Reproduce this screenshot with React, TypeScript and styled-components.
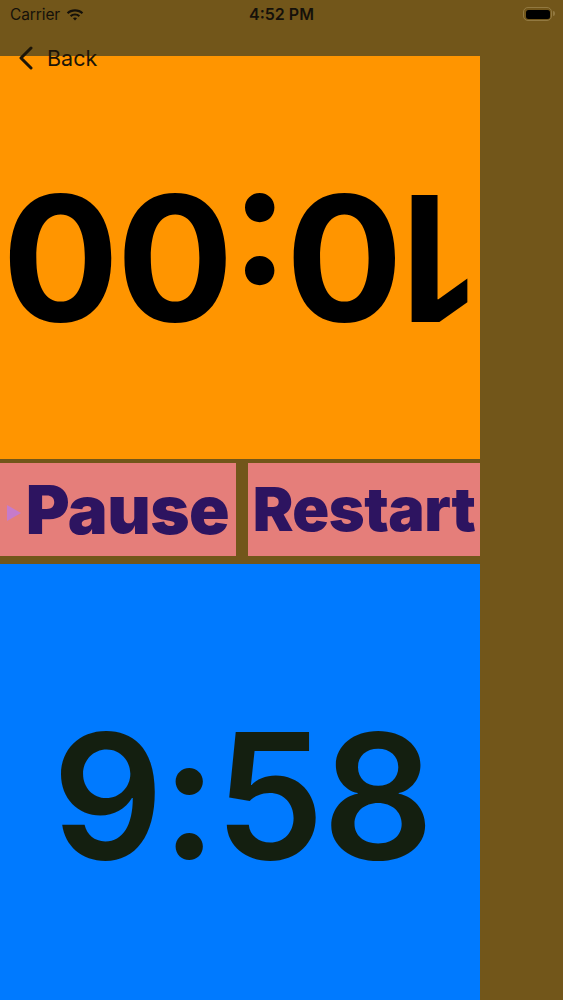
import React from "react";
import styled, { createGlobalStyle } from "styled-components";

const GlobalStyle = createGlobalStyle`
  html, body {
    margin: 0;
    padding: 0;
    background: #72561a;
  }
  * {
    box-sizing: border-box;
  }
`;

const Screen = styled.div`
  position: relative;
  width: 563px;
  height: 1000px;
  overflow: hidden;
  background: #72561a;
  padding-top: 56px;
  font-family: Inter, "Noto Sans", sans-serif;
`;

/* status bar + nav bar sit over the content */
const TopBar = styled.header`
  position: absolute;
  top: 0;
  left: 0;
  right: 0;
  z-index: 2;
`;

const StatusBar = styled.div`
  position: relative;
  height: 30px;
  display: flex;
  align-items: center;
  justify-content: space-between;
  padding: 0 10px 2px 10px;
  color: #15110a;
  font-size: 15.5px;
`;

const Carrier = styled.div`
  display: flex;
  align-items: center;
  gap: 6px;
  letter-spacing: -0.1px;
`;

const Clock = styled.div`
  position: absolute;
  left: 0;
  right: 0;
  text-align: center;
  font-weight: 600;
  font-size: 16px;
  pointer-events: none;
`;

const Battery = styled.div`
  position: relative;
  width: 29px;
  height: 14px;
  border: 1.5px solid rgba(150, 125, 70, 0.9);
  border-radius: 5px;
  padding: 1.5px;
  margin-right: 1px;
  &::before {
    content: "";
    display: block;
    width: 100%;
    height: 100%;
    border-radius: 2.5px;
    background: #000;
  }
  &::after {
    content: "";
    position: absolute;
    right: -4px;
    top: 3px;
    width: 2px;
    height: 5px;
    border-radius: 0 2px 2px 0;
    background: rgba(150, 125, 70, 0.9);
  }
`;

const NavBar = styled.div`
  height: 55px;
  display: flex;
  align-items: center;
  padding-left: 18px;
`;

const BackButton = styled.button`
  display: flex;
  align-items: center;
  gap: 13px;
  border: 0;
  background: none;
  padding: 0;
  color: #1a1408;
  font-family: Inter, "Noto Sans", sans-serif;
  font-size: 21.5px;
  cursor: pointer;
`;

const Column = styled.main`
  width: 480px;
  height: 944px;
  display: flex;
  flex-direction: column;
`;

const TimerPanel = styled.section<{ $bg: string; $flipped?: boolean }>`
  display: flex;
  align-items: center;
  justify-content: center;
  background: ${(p) => p.$bg};
  overflow: hidden;
  height: ${(p) => (p.$flipped ? "403px" : "auto")};
  flex: ${(p) => (p.$flipped ? "none" : "1")};
  margin-top: ${(p) => (p.$flipped ? "0" : "8px")};
`;

const TimeText = styled.div<{ $color: string; $flipped?: boolean }>`
  color: ${(p) => p.$color};
  font-size: ${(p) => (p.$flipped ? "174px" : "174px")};
  font-weight: ${(p) => (p.$flipped ? 700 : 600)};
  letter-spacing: ${(p) => (p.$flipped ? "-3px" : "-2px")};
  line-height: 1;
  white-space: nowrap;
  transform: ${(p) => (p.$flipped ? "rotate(180deg)" : "none")};
  margin-top: ${(p) => (p.$flipped ? "0" : "28px")};
  margin-left: ${(p) => (p.$flipped ? "0" : "4px")};
`;

const ButtonRow = styled.div`
  height: 93px;
  margin-top: 4px;
  display: grid;
  grid-template-columns: 236px 1fr;
  gap: 12px;
`;

const ActionButton = styled.button<{ $size: number }>`
  display: flex;
  align-items: center;
  justify-content: center;
  gap: 5px;
  border: 0;
  padding: 0;
  background: #e57e7a;
  color: #2d1460;
  font-family: Inter, "Noto Sans", sans-serif;
  font-weight: 900;
  font-size: ${(p) => p.$size}px;
  letter-spacing: -0.5px;
  line-height: 1;
  cursor: pointer;
  white-space: nowrap;
  overflow: hidden;
`;

const PlayMark = styled.span`
  width: 0;
  height: 0;
  border-top: 8px solid transparent;
  border-bottom: 8px solid transparent;
  border-left: 14px solid #c67bcb;
  margin-top: 6px;
`;

const Wifi = () => (
  <svg width="18" height="13" viewBox="0 0 18 13">
    <path d="M9 1.2c3.2 0 6.1 1.2 8.2 3.2l-1.5 1.6C14 4.4 11.6 3.4 9 3.4S4 4.4 2.3 6L.8 4.4C2.9 2.4 5.8 1.2 9 1.2z" fill="#15110a" />
    <path d="M9 5.4c2 0 3.8.8 5.1 2l-1.6 1.6C11.6 8.1 10.4 7.6 9 7.6s-2.6.5-3.5 1.4L3.9 7.4c1.3-1.2 3.1-2 5.1-2z" fill="#15110a" />
    <path d="M9 9.5c.8 0 1.5.3 2 .8L9 12.4l-2-2.1c.5-.5 1.2-.8 2-.8z" fill="#15110a" />
  </svg>
);

const Chevron = () => (
  <svg width="16" height="24" viewBox="0 0 16 24">
    <path d="M13 2L3 12l10 10" fill="none" stroke="#1a1408" strokeWidth="3" strokeLinecap="round" strokeLinejoin="round" />
  </svg>
);

const App = () => {
  return (
    <>
      <GlobalStyle />
      <Screen>
        <TopBar>
          <StatusBar>
            <Carrier>
              Carrier
              <Wifi />
            </Carrier>
            <Clock>4:52 PM</Clock>
            <Battery />
          </StatusBar>
          <NavBar>
            <BackButton>
              <Chevron />
              Back
            </BackButton>
          </NavBar>
        </TopBar>
        <Column>
          <TimerPanel $bg="#ff9500" $flipped>
            <TimeText $color="#000" $flipped>
              10:00
            </TimeText>
          </TimerPanel>
          <ButtonRow>
            <ActionButton $size={67}>
              <PlayMark />
              Pause
            </ActionButton>
            <ActionButton $size={61}>Restart</ActionButton>
          </ButtonRow>
          <TimerPanel $bg="#007aff">
            <TimeText $color="#141f10">9:58</TimeText>
          </TimerPanel>
        </Column>
      </Screen>
    </>
  );
};

export default App;
